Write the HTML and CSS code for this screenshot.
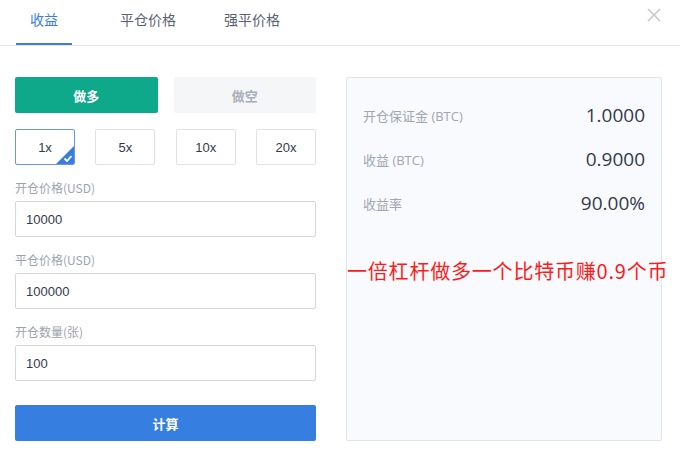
FILE: index.html
```html
<!DOCTYPE html>
<html lang="zh-CN">
<head>
    <meta charset="UTF-8">
    <title>合约计算器</title>
    <link rel="stylesheet" href="styles.css">
</head>
<body>
    <div class="calc">
        <header class="tabs">
            <span class="tab active">收益</span>
            <span class="tab">平仓价格</span>
            <span class="tab">强平价格</span>
            <svg class="close" width="14" height="14" viewBox="0 0 14 14">
                <path d="M1 1L13 13M13 1L1 13" stroke="#c8c8c8" stroke-width="1.6" fill="none"/>
            </svg>
        </header>

        <main class="body">
            <section class="form">
                <div class="sides">
                    <button class="side long">做多</button>
                    <button class="side short">做空</button>
                </div>
                <div class="levers">
                    <button class="lever selected">1x
                        <svg class="tick" width="18" height="18" viewBox="0 0 18 18">
                            <path d="M18 0V18H0Z" fill="#3a7de0"/>
                            <path d="M8.5 12.5L11 15L15.5 10" stroke="#fff" stroke-width="1.8" fill="none"/>
                        </svg>
                    </button>
                    <button class="lever">5x</button>
                    <button class="lever">10x</button>
                    <button class="lever">20x</button>
                </div>
                <label class="field">
                    <span class="label">开仓价格(USD)</span>
                    <input type="text" value="10000">
                </label>
                <label class="field">
                    <span class="label">平仓价格(USD)</span>
                    <input type="text" value="100000">
                </label>
                <label class="field">
                    <span class="label">开仓数量(张)</span>
                    <input type="text" value="100">
                </label>
                <button class="submit">计算</button>
            </section>

            <section class="result">
                <div class="row"><span class="name">开仓保证金 (BTC)</span><span class="value">1.0000</span></div>
                <div class="row"><span class="name">收益 (BTC)</span><span class="value">0.9000</span></div>
                <div class="row"><span class="name">收益率</span><span class="value">90.00%</span></div>
                <p class="note">一倍杠杆做多一个比特币赚0.9个币</p>
            </section>
        </main>
    </div>
</body>
</html>
```

FILE: styles.css
```css
body {
    margin: 0;
    font-family: "Noto Sans CJK SC", "Noto Sans", sans-serif;
    background: #fff;
    color: #333a4d;
}

.calc {
    width: 680px;
    height: 458px;
}

.tabs {
    display: flex;
    height: 45px;
    padding-left: 16px;
    border-bottom: 1px solid #e4e6ec;
    position: relative;
}

.tab {
    width: 56px;
    margin-right: 48px;
    font-size: 14px;
    line-height: 38px;
    text-align: center;
    color: #5a6272;
    border-bottom: 2px solid transparent;
    height: 43px;
    box-sizing: content-box;
}

.tab.active {
    color: #3a7de0;
    border-bottom-color: #3a7de0;
}

.close {
    position: absolute;
    right: 19px;
    top: 8px;
}

.body {
    display: flex;
    padding: 31px 18px 0 15px;
    gap: 30px;
}

.form {
    width: 301px;
}

.sides {
    display: flex;
    gap: 16px;
}

button {
    font-family: inherit;
    cursor: pointer;
}

.side {
    flex: 1;
    height: 36px;
    border: none;
    border-radius: 2px;
    font-size: 13px;
    font-weight: bold;
}

.side.long {
    background: #0ea88a;
    color: #fff;
}

.side.short {
    background: #f5f6f8;
    color: #a9afba;
}

.levers {
    display: flex;
    justify-content: space-between;
    margin-top: 16px;
}

.lever {
    position: relative;
    width: 60px;
    height: 36px;
    background: #fff;
    border: 1px solid #dfe2e8;
    border-radius: 2px;
    font-size: 13px;
    color: #333a4d;
    font-family: "Liberation Sans", Arial, sans-serif;
    padding: 0;
    overflow: hidden;
}

.lever.selected {
    border-color: #6c95e8;
}

.tick {
    position: absolute;
    right: 0;
    bottom: 0;
}

.field {
    display: block;
    margin-top: 15px;
}

.label {
    display: block;
    font-size: 12px;
    color: #9da3ae;
    line-height: 16px;
    margin-bottom: 5px;
}

.field input {
    display: block;
    width: 100%;
    height: 36px;
    box-sizing: border-box;
    border: 1px solid #d3d6de;
    border-radius: 2px;
    padding: 0 10px;
    font-size: 13px;
    font-family: "Liberation Sans", Arial, sans-serif;
    color: #333a4d;
}

.submit {
    display: block;
    width: 100%;
    height: 36px;
    margin-top: 24px;
    border: none;
    border-radius: 2px;
    background: #367fe0;
    color: #fff;
    font-size: 13px;
    font-weight: bold;
}

.result {
    position: relative;
    width: 316px;
    height: 364px;
    box-sizing: border-box;
    background: #f9fafd;
    border: 1px solid #e1e4ea;
    border-radius: 2px;
    padding: 15px 16px 0 16px;
}

.row {
    display: flex;
    justify-content: space-between;
    align-items: center;
    height: 44px;
}

.name {
    font-family: "Open Sans", "Noto Sans CJK SC", sans-serif;
    font-size: 13px;
    color: #a0a6b2;
}

.value {
    font-family: "Open Sans", sans-serif;
    font-size: 19px;
    color: #333a4d;
}

.note {
    position: absolute;
    left: 0;
    top: 178px;
    margin: 0;
    white-space: nowrap;
    font-size: 20px;
    letter-spacing: 0.8px;
    color: #ff1a1a;
}
```
